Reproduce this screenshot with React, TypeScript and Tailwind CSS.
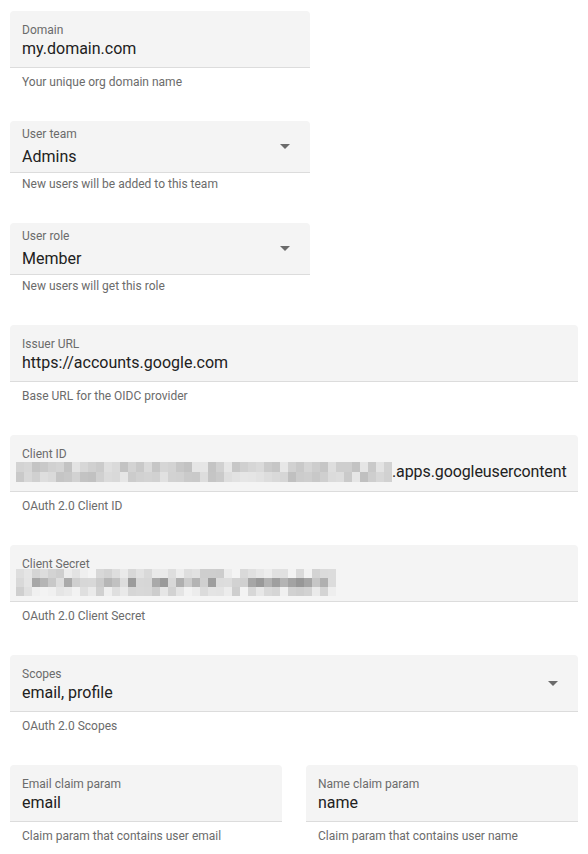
import React from "react";

function rand(seed: number) {
  let s = seed;
  return () => {
    s = (s * 9301 + 49297) % 233280;
    return s / 233280;
  };
}

function Pixels({ cols, rows, rowH, colW, seed, dark }: { cols: number; rows: number; rowH: number; colW: number; seed: number; dark?: number }) {
  const r = rand(seed);
  const grid: string[][] = [];
  for (let y = 0; y < rows; y++) {
    const row: string[] = [];
    for (let x = 0; x < cols; x++) {
      let v: number;
      if (dark !== undefined && y === dark) {
        v = 150 + Math.floor(r() * 80);
      } else if (dark !== undefined) {
        v = 205 + Math.floor(r() * 40);
      } else {
        v = 192 + Math.floor(r() * 40);
      }
      row.push(`rgb(${v},${v},${v})`);
    }
    grid.push(row);
  }
  return (
    <div className="flex flex-col shrink-0">
      {grid.map((row, i) => (
        <div key={i} className="flex">
          {row.map((c, j) => (
            <div key={j} style={{ width: colW, height: rowH, background: c }} />
          ))}
        </div>
      ))}
    </div>
  );
}

function Arrow() {
  return (
    <svg width="10" height="5" viewBox="0 0 10 5" className="shrink-0">
      <path d="M0 0 L10 0 L5 5 Z" fill="#6b6b6b" />
    </svg>
  );
}

function TextField({ label, value, helper, width, arrow }: { label: string; value: string; helper: string; width: string; arrow?: boolean }) {
  return (
    <div className={`${width} mb-[32px]`}>
      <div className="h-[57px] bg-[#f4f4f4] rounded-t-[4px] border-b border-[#dcdcdc] flex items-center pl-[12px] pr-[20px] overflow-hidden">
        <div className="flex-1 min-w-0 h-full pt-[12px]">
          <div className="text-[12px] leading-[14px] text-[#6b6b6b]">{label}</div>
          <div className="mt-[2px] text-[16px] leading-[20px] text-[#212121] whitespace-nowrap">{value}</div>
        </div>
        {arrow && <Arrow />}
      </div>
      <div className="pl-[12px] pt-[7px] text-[12px] leading-[14px] text-[#6b6b6b]">{helper}</div>
    </div>
  );
}

function SelectField({ label, value, helper }: { label: string; value: string; helper: string }) {
  return (
    <div className="w-[300px] mb-[32px]">
      <div className="h-[52px] bg-[#f4f4f4] rounded-t-[4px] border-b border-[#dcdcdc] flex items-center pl-[12px] pr-[20px]">
        <div className="flex-1 h-full pt-[6px]">
          <div className="text-[12px] leading-[14px] text-[#6b6b6b]">{label}</div>
          <div className="mt-[6px] text-[16px] leading-[20px] text-[#212121]">{value}</div>
        </div>
        <Arrow />
      </div>
      <div className="pl-[12px] pt-[4px] text-[12px] leading-[14px] text-[#6b6b6b]">{helper}</div>
    </div>
  );
}

export default function App() {
  return (
    <div className="w-[588px] h-[854px] bg-white pl-[10px] pt-[11px] overflow-hidden" style={{ fontFamily: "Roboto, 'Liberation Sans', sans-serif" }}>
      <TextField label="Domain" value="my.domain.com" helper="Your unique org domain name" width="w-[300px]" />
      <SelectField label="User team" value="Admins" helper="New users will be added to this team" />
      <SelectField label="User role" value="Member" helper="New users will get this role" />
      <TextField label="Issuer URL" value="https://accounts.google.com" helper="Base URL for the OIDC provider" width="w-[568px]" />
      <div className="w-[568px] mb-[32px]">
        <div className="h-[57px] bg-[#f4f4f4] rounded-t-[4px] border-b border-[#dcdcdc] pl-[6px] overflow-hidden">
          <div className="pt-[12px] pl-[6px] text-[12px] leading-[14px] text-[#6b6b6b]">Client ID</div>
          <div className="flex items-center mt-[1px] whitespace-nowrap">
            <Pixels cols={47} rows={2} rowH={10} colW={8} seed={7} />
            <span className="text-[16px] leading-[20px] text-[#212121] tracking-[-0.1px]">.apps.googleusercontent</span>
          </div>
        </div>
        <div className="pl-[12px] pt-[7px] text-[12px] leading-[14px] text-[#6b6b6b]">OAuth 2.0 Client ID</div>
      </div>
      <div className="w-[568px] mb-[32px]">
        <div className="h-[57px] bg-[#f4f4f4] rounded-t-[4px] border-b border-[#dcdcdc] pl-[6px] overflow-hidden">
          <div className="pt-[12px] pl-[6px] text-[12px] leading-[14px] text-[#6b6b6b]">Client Secret</div>
          <div className="mt-[-2px]">
            <Pixels cols={40} rows={3} rowH={9} colW={8} seed={31} dark={1} />
          </div>
        </div>
        <div className="pl-[12px] pt-[7px] text-[12px] leading-[14px] text-[#6b6b6b]">OAuth 2.0 Client Secret</div>
      </div>
      <TextField label="Scopes" value="email, profile" helper="OAuth 2.0 Scopes" width="w-[568px]" arrow />
      <div className="flex gap-[24px] w-[568px]">
        <TextField label="Email claim param" value="email" helper="Claim param that contains user email" width="w-[272px]" />
        <TextField label="Name claim param" value="name" helper="Claim param that contains user name" width="w-[272px]" />
      </div>
    </div>
  );
}
